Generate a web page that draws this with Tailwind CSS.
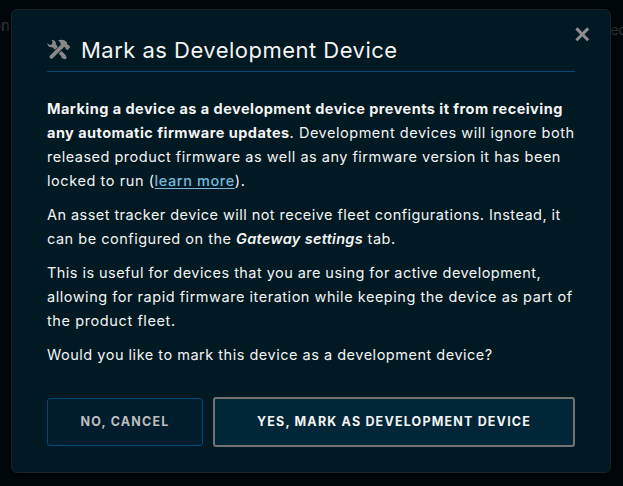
<!DOCTYPE html>
<html lang="en">
<head>
<meta charset="utf-8">
<title>Mark as Development Device</title>
<script src="https://cdn.jsdelivr.net/npm/@tailwindcss/browser@4"></script>
</head>
<body class="relative h-[486px] w-[623px] overflow-hidden bg-[#00080c] p-[10px] pt-[9px] pl-[11px] font-['Inter','Liberation_Sans',sans-serif] text-[#f4f4f4]">
<span class="absolute -left-[8px] top-[17px] text-[15px] leading-[18px] text-[#3a4145]">on</span>
<span class="absolute left-[606px] top-[21px] text-[14px] leading-[18px] text-[#353b3e]">ted</span>
<main class="relative h-[464px] w-[600px] rounded-[6px] border border-[#1c2225] bg-[#001923] px-[35px] shadow-[0_2px_12px_3px_rgba(0,0,0,0.6)]">
  <button aria-label="Close" class="absolute left-[563px] top-[17px]">
    <svg class="size-[15px]" viewBox="0 0 15 15" fill="none" stroke="#8e8e8e" stroke-width="3"><path d="M1.4 1.4 13.2 13.2M13.2 1.4 1.4 13.2"/></svg>
  </button>
  <header class="flex h-[62px] items-start border-b border-[#004876]">
    <svg class="mt-[29px] h-[21px] w-[24px]" viewBox="0 0 24 21" fill="none" stroke="#888">
      <path d="M6.2 6.2 17.6 17.8" stroke-width="3.8"/>
      <path d="M16.2 17.8 17.8 18.4" stroke-width="3.6" stroke-linecap="round"/>
      <path d="M4.4 17.8 16.2 6.6" stroke="#001923" stroke-width="5.2"/>
      <path d="M4.4 17.8 16.2 6.2" stroke-width="3.8" stroke-linecap="round"/>
      <path d="M4.6 1.2C7 .6 9.3 2.400 8.9 5.200L10.200 7 7.500 9.500 5.600 8.200C2.800 8.900 .5 7.200 .3 4L2.600 5.900 5 5.300 5.600 3Z" fill="#888" stroke="none"/>
      <path d="M10.800 1.600C13.600 .2 17.200 .4 19.800 3.200L20.300 5.600 21.500 6.100 23.300 8 20.400 11.300 18.500 9.400 18.300 8.200 16.800 8 13.600 5.200C13.600 3.400 12.700 2.300 10.800 1.600Z" fill="#888" stroke="none"/>
    </svg>
    <h1 class="ml-[10px] mt-[25px] whitespace-nowrap text-[22px] leading-[30px] tracking-[0.48px]">Mark as Development Device</h1>
  </header>
  <div class="mt-[25px] space-y-[10px] whitespace-nowrap text-[14.5px] leading-[24px] tracking-[0.45px]">
    <p>
      <b class="block tracking-[0.46px]">Marking a device as a development device prevents it from receiving</b>
      <span class="block tracking-[0.53px]"><b class="tracking-[0.46px]">any automatic firmware updates</b>. Development devices will ignore both</span>
      <span class="block tracking-[0.5px]">released product firmware as well as any firmware version it has been</span>
      <span class="block tracking-[0.58px]">locked to run (<a class="font-medium text-[#74b9dc] underline underline-offset-2">learn more</a>).</span>
    </p>
    <p>
      <span class="block">An asset tracker device will not receive fleet configurations. Instead, it</span>
      <span class="block tracking-[0.51px]">can be configured on the <i class="font-semibold tracking-[0.3px]">Gateway settings</i> tab.</span>
    </p>
    <p>
      <span class="block">This is useful for devices that you are using for active development,</span>
      <span class="block tracking-[0.53px]">allowing for rapid firmware iteration while keeping the device as part of</span>
      <span class="block tracking-[0.6px]">the product fleet.</span>
    </p>
    <p class="tracking-[0.51px]">Would you like to mark this device as a development device?</p>
  </div>
  <div class="mt-[30px] flex items-center gap-[10px] whitespace-nowrap text-[12.5px] font-bold tracking-[1.18px]">
    <button class="h-[48px] w-[156px] rounded-[3px] border border-[#004876] bg-[#001c2d] text-[#bebebe]">NO, CANCEL</button>
    <button class="h-[50px] w-[362px] rounded-[3px] border-2 border-[#737373] bg-[#002637]">YES, MARK AS DEVELOPMENT DEVICE</button>
  </div>
</main>
</body>
</html>
